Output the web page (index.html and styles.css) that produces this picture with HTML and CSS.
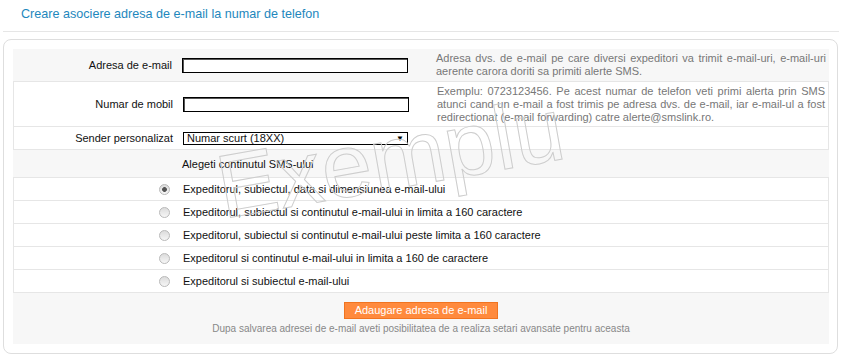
FILE: index.html
```html
<!DOCTYPE html>
<html lang="ro">
<head>
  <meta charset="UTF-8">
  <title>Creare asociere adresa de e-mail</title>
  <link rel="stylesheet" href="styles.css">
</head>
<body>
  <h1 class="title">Creare asociere adresa de e-mail la numar de telefon</h1>

  <div class="panel">
    <form class="form">
      <!-- Adresa de e-mail -->
      <div class="row grey r-email">
        <label class="lbl" for="email">Adresa de e-mail</label>
        <div class="field"><input type="text" id="email" class="inp"></div>
        <div class="hint">Adresa dvs. de e-mail pe care diversi expeditori va trimit e-mail-uri, e-mail-uri aerente carora doriti sa primiti alerte SMS.</div>
      </div>

      <!-- Numar de mobil -->
      <div class="row white r-mobile">
        <label class="lbl" for="mobil">Numar de mobil</label>
        <div class="field"><input type="text" id="mobil" class="inp"></div>
        <div class="hint">Exemplu: 0723123456. Pe acest numar de telefon veti primi alerta prin SMS atunci cand un e-mail a fost trimis pe adresa dvs. de e-mail, iar e-mail-ul a fost redirectionat (e-mail forwarding) catre alerte@smslink.ro.</div>
      </div>

      <!-- Sender -->
      <div class="row white r-sender">
        <label class="lbl" for="sender">Sender personalizat</label>
        <div class="field">
          <div class="select">
            <select id="sender">
              <option>Numar scurt (18XX)</option>
            </select>
          </div>
        </div>
      </div>

      <div class="row grey r-choose">
        <span></span>
        <div class="wide">Alegeti continutul SMS-ului</div>
      </div>

      <!-- Optiuni continut -->
      <label class="row white opt">
        <span class="radio-cell"><input type="radio" name="tip" checked></span>
        <span class="wide">Expeditorul, subiectul, data si dimensiunea e-mail-ului</span>
      </label>
      <label class="row white opt">
        <span class="radio-cell"><input type="radio" name="tip"></span>
        <span class="wide">Expeditorul, subiectul si continutul e-mail-ului in limita a 160 caractere</span>
      </label>
      <label class="row white opt">
        <span class="radio-cell"><input type="radio" name="tip"></span>
        <span class="wide">Expeditorul, subiectul si continutul e-mail-ului peste limita a 160 caractere</span>
      </label>
      <label class="row white opt">
        <span class="radio-cell"><input type="radio" name="tip"></span>
        <span class="wide">Expeditorul si continutul e-mail-ului in limita a 160 de caractere</span>
      </label>
      <label class="row white opt">
        <span class="radio-cell"><input type="radio" name="tip"></span>
        <span class="wide">Expeditorul si subiectul e-mail-ului</span>
      </label>

      <div class="actions grey">
        <button type="button" class="btn">Adaugare adresa de e-mail</button>
        <p class="note">Dupa salvarea adresei de e-mail aveti posibilitatea de a realiza setari avansate pentru aceasta</p>
      </div>
    </form>

    <!-- watermark over the form -->
    <div class="watermark">Exemplu</div>
  </div>
</body>
</html>
```

FILE: styles.css
```css
body {
  margin: 0;
  font-family: "Liberation Sans", Arial, sans-serif;
  font-size: 11px;
  color: #111;
  background: #fff;
}

/* Page title */
.title {
  margin: 0 3px;
  padding: 7px 0 9px 18px;
  font-size: 12.6px;
  line-height: 15px;
  font-weight: normal;
  color: #1e87bd;
  border-bottom: 1px solid #e6e6e6;
}

/* Rounded box */
.panel {
  position: relative;
  overflow: hidden;
  margin: 7px 4px 0 3px;
  padding: 9px 8px 9px 9px;
  border: 1px solid #dedede;
  border-radius: 8px;
}

.form {
  margin: 0;
}

/* Form rows */
.row {
  display: grid;
  grid-template-columns: 164px 259px 1fr;
  align-items: center;
}

.grey {
  background: #f7f7f7;
}

.white {
  background: #fff;
  border: 1px solid #e6e6e6;
}

.white + .white {
  border-top: 0;
}

.r-email { height: 32px; }
.r-mobile { height: 44px; }
.r-sender { height: 22px; }
.r-choose { height: 27px; }
.opt { height: 22px; }

.lbl {
  text-align: right;
  padding-right: 5px;
}

.field {
  padding-left: 5px;
}

.inp {
  display: block;
  box-sizing: border-box;
  width: 226px;
  height: 15px;
  margin: 0;
  padding: 0 2px;
  border: 1px solid #000;
  box-shadow: inset 1px 1px 0 #555;
  font: inherit;
}

.hint {
  padding-right: 3px;
  color: #777;
  line-height: 13px;
  text-align: justify;
}

/* Select box */
.select {
  position: relative;
  width: 225px;
}

.select select {
  display: block;
  box-sizing: border-box;
  width: 100%;
  height: 13px;
  margin: 0;
  padding: 0 0 0 3px;
  border: 1px solid #000;
  border-radius: 0;
  background: #fff;
  font: inherit;
  line-height: 11px;
  color: #111;
  appearance: none;
  -webkit-appearance: none;
}

.select::after {
  content: "\25BC";
  position: absolute;
  right: 4px;
  top: 2px;
  font-size: 8px;
  line-height: 9px;
  color: #000;
  pointer-events: none;
}

.wide {
  grid-column: 2 / 4;
  padding-left: 5px;
}

/* Radio buttons */
.radio-cell {
  justify-self: end;
  margin-right: 8px;
  height: 11px;
}

.radio-cell input {
  appearance: none;
  -webkit-appearance: none;
  display: block;
  width: 11px;
  height: 11px;
  margin: 0;
  border: 1px solid #b9b9b9;
  border-radius: 50%;
  background: linear-gradient(#dcdcdc, #f6f6f6);
}

.radio-cell input:checked {
  background: radial-gradient(circle, #555 0, #555 2px, transparent 2.8px), linear-gradient(#dcdcdc, #f6f6f6);
}

/* Bottom actions */
.actions {
  padding: 9px 0 9px;
  text-align: center;
}

.btn {
  display: inline-block;
  margin: 0;
  padding: 1px 10px;
  border: 1px solid #f07420;
  background: #ff8a3d;
  color: #fff;
  font: inherit;
  line-height: 13px;
  cursor: pointer;
}

.note {
  margin: 3px 0 0;
  font-size: 10px;
  line-height: 13px;
  color: #888;
}

/* "Exemplu" watermark */
.watermark {
  position: absolute;
  left: 206px;
  top: 104px;
  font-size: 90px;
  line-height: 1;
  white-space: nowrap;
  color: transparent;
  -webkit-text-stroke: 1px #cdcdcd;
  transform-origin: 0 0;
  transform: rotate(-10deg);
  pointer-events: none;
}
```
